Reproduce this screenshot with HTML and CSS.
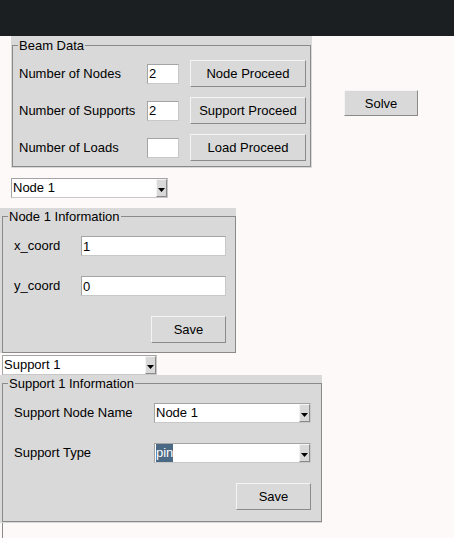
FILE: index.html
```html
<!DOCTYPE html>
<html>
<head>
<meta charset="utf-8">
<link rel="stylesheet" href="styles.css">
</head>
<body>
<div class="topbar"></div>
<main class="app">
  <div class="top-row">
    <div class="frame-wrap beam-wrap">
      <fieldset class="frame beam">
        <legend>Beam Data</legend>
        <div class="beam-grid">
          <span class="lbl">Number of Nodes</span>
          <input class="entry" value="2">
          <button class="btn">Node Proceed</button>
          <span class="lbl">Number of Supports</span>
          <input class="entry" value="2">
          <button class="btn">Support Proceed</button>
          <span class="lbl">Number of Loads</span>
          <input class="entry" value="">
          <button class="btn">Load Proceed</button>
        </div>
      </fieldset>
    </div>
    <button class="btn solve">Solve</button>
  </div>

  <div class="combo node-select">
    <span class="combo-text">Node 1</span>
    <span class="combo-arrow"><svg width="7" height="4" viewBox="0 0 7 4"><path d="M0 0H7L3.5 4Z" fill="#000"/></svg></span>
  </div>

  <div class="frame-wrap node-wrap">
    <fieldset class="frame node">
      <legend>Node 1 Information</legend>
      <div class="node-grid">
        <span class="lbl">x_coord</span>
        <input class="entry wide" value="1">
        <span class="lbl">y_coord</span>
        <input class="entry wide" value="0">
        <button class="btn save">Save</button>
      </div>
    </fieldset>
  </div>

  <div class="combo support-select">
    <span class="combo-text">Support 1</span>
    <span class="combo-arrow"><svg width="7" height="4" viewBox="0 0 7 4"><path d="M0 0H7L3.5 4Z" fill="#000"/></svg></span>
  </div>

  <div class="frame-wrap support-wrap">
    <fieldset class="frame support">
      <legend>Support 1 Information</legend>
      <div class="support-grid">
        <span class="lbl">Support Node Name</span>
        <div class="combo field">
          <span class="combo-text">Node 1</span>
          <span class="combo-arrow"><svg width="7" height="4" viewBox="0 0 7 4"><path d="M0 0H7L3.5 4Z" fill="#000"/></svg></span>
        </div>
        <span class="lbl">Support Type</span>
        <div class="combo field">
          <span class="combo-text"><span class="sel">pin</span></span>
          <span class="combo-arrow"><svg width="7" height="4" viewBox="0 0 7 4"><path d="M0 0H7L3.5 4Z" fill="#000"/></svg></span>
        </div>
        <button class="btn save">Save</button>
      </div>
    </fieldset>
  </div>
  <div class="tail"></div>
</main>
</body>
</html>
```
FILE: styles.css
```css
html, body {
  margin: 0;
  padding: 0;
}
body {
  background: #fdf9f8;
  font-family: "Liberation Sans", Arial, sans-serif;
  font-size: 13px;
  color: #000;
  width: 454px;
  height: 538px;
  overflow: hidden;
}
.topbar {
  height: 36px;
  background: #1c1f22;
}
.app {
  display: flex;
  flex-direction: column;
  align-items: flex-start;
}
.top-row {
  display: flex;
  align-items: flex-start;
}
.frame-wrap {
  background: #d9d9d9;
  box-sizing: border-box;
}
.frame {
  margin: 0;
  padding: 0;
  border: 1px solid #8a8a8a;
  min-inline-size: 0;
  box-sizing: border-box;
}
.frame legend {
  margin-left: 5px;
  padding: 0 1px;
  line-height: 17px;
  font-size: 13px;
}
.lbl {
  white-space: nowrap;
  line-height: 16px;
}
.entry {
  box-sizing: border-box;
  height: 20px;
  margin: 0;
  padding: 0 0 0 1px;
  border: 1px solid;
  border-color: #a4a4a4 #c8c8c8 #c8c8c8 #a4a4a4;
  background: #fff;
  font-family: "Liberation Sans", Arial, sans-serif;
  font-size: 13px;
  color: #000;
  outline: none;
}
.btn {
  box-sizing: border-box;
  height: 27px;
  margin: 0;
  padding: 0;
  background: #d9d9d9;
  border: 1px solid;
  border-color: #f4f4f4 #8a8a8a #8a8a8a #f4f4f4;
  font-family: "Liberation Sans", Arial, sans-serif;
  font-size: 13px;
  color: #000;
}

/* Beam data */
.beam-wrap {
  margin-left: 11px;
  padding: 1px;
  width: 301px;
}
.beam {
  width: 299px;
}
.beam-grid {
  display: grid;
  grid-template-columns: 117px 32px 116px;
  column-gap: 11px;
  row-gap: 10px;
  grid-auto-rows: 27px;
  align-items: center;
  padding: 6px 4px 5px 6px;
}
.beam-grid .entry {
  width: 32px;
}
.beam-grid .btn {
  width: 116px;
}
.solve {
  margin-left: 32px;
  margin-top: 54px;
  width: 74px;
  height: 26px;
}

/* Comboboxes */
.combo {
  box-sizing: border-box;
  display: flex;
  height: 20px;
  background: #fff;
  border: 1px solid;
  border-color: #a4a4a4 #c8c8c8 #c8c8c8 #a4a4a4;
}
.combo-text {
  flex: 1;
  line-height: 18px;
  padding-left: 1px;
  white-space: nowrap;
  overflow: hidden;
}
.combo-arrow {
  box-sizing: border-box;
  width: 11px;
  display: flex;
  align-items: flex-end;
  justify-content: center;
  padding-bottom: 4px;
  background: #d9d9d9;
  border: 1px solid;
  border-color: #f4f4f4 #8a8a8a #8a8a8a #f4f4f4;
}
.combo-arrow svg {
  display: block;
}
.sel {
  background: #4a6984;
  color: #fff;
  display: inline-block;
  height: 18px;
}
.node-select {
  margin-left: 11px;
  margin-top: 10px;
  width: 157px;
}
.support-select {
  margin-left: 2px;
  margin-top: 2px;
  width: 155px;
}

/* Node frame */
.node-wrap {
  margin-top: 10px;
  padding: 0 0 0 2px;
  width: 236px;
}
.node {
  width: 234px;
}
.node-grid {
  display: grid;
  grid-template-columns: 67px 145px;
  row-gap: 20px;
  align-items: center;
  padding: 11px 9px 9px 11px;
}
.node-grid .entry {
  width: 145px;
}
.save {
  grid-column: 2;
  justify-self: end;
  width: 75px;
}

/* Support frame */
.support-wrap {
  padding: 0 0 1px 2px;
  width: 322px;
}
.support {
  width: 320px;
}
.support-grid {
  display: grid;
  grid-template-columns: 140px 157px;
  row-gap: 20px;
  align-items: center;
  padding: 11px 10px 11px 11px;
}
.support-grid .field {
  width: 157px;
}
.tail {
  margin-left: 2px;
  height: 30px;
  border-left: 1px solid #8a8a8a;
}
```
